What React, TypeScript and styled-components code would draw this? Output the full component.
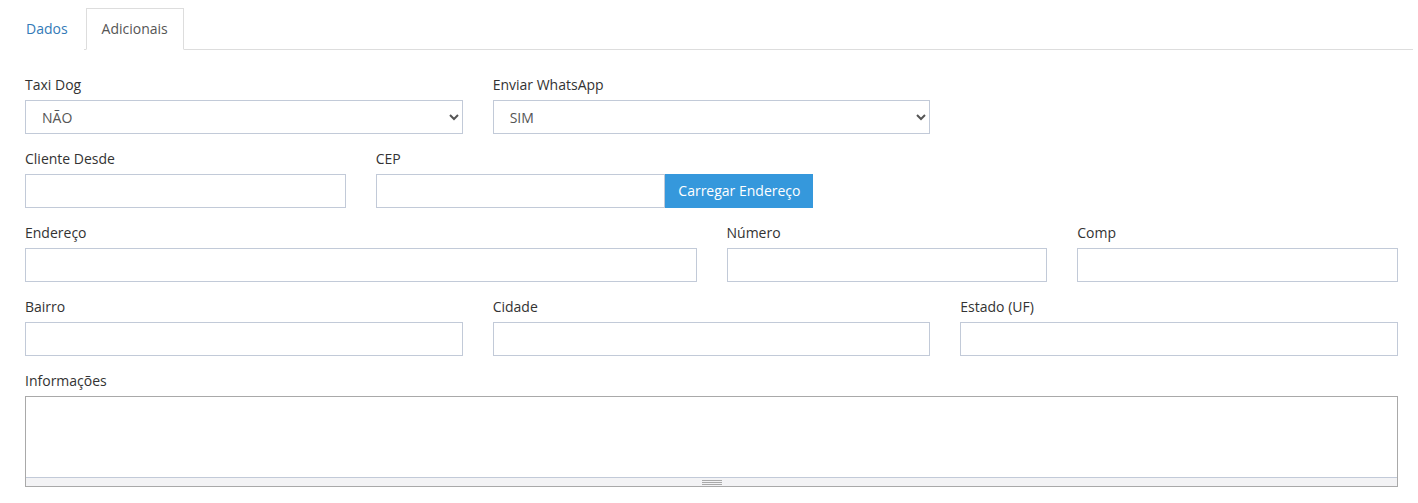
import React, { useState } from 'react';
import styled, { createGlobalStyle } from 'styled-components';

const GlobalStyle = createGlobalStyle`
  * { box-sizing: border-box; }
  body {
    margin: 0;
    background: #fff;
    font-family: "Open Sans", "Liberation Sans", sans-serif;
    font-size: 14px;
    line-height: 1.42857;
    color: #333;
  }
`;

const Page = styled.div`
  padding: 8px 5px 0 10px;
`;

const Tabs = styled.ul`
  display: flex;
  list-style: none;
  margin: 0;
  padding: 0;
  border-bottom: 1px solid #ddd;
`;

const Tab = styled.li<{ $active?: boolean }>`
  margin-right: 2px;
  margin-bottom: -1px;
  padding: 10px 15px;
  border: 1px solid ${p => (p.$active ? '#ddd' : 'transparent')};
  border-bottom-color: ${p => (p.$active ? '#fff' : 'transparent')};
  background: #fff;
  color: ${p => (p.$active ? '#555' : '#337ab7')};
  cursor: pointer;
  line-height: 20px;
`;

const Body = styled.div`
  padding: 25px 0 0;
`;

const Row = styled.div`
  display: flex;
  flex-wrap: wrap;
`;

const Group = styled.div<{ $span: number }>`
  width: ${p => (p.$span / 12) * 100}%;
  padding: 0 15px;
  margin-bottom: 15px;
`;

const Label = styled.label`
  display: block;
  margin-bottom: 5px;
  color: #333;
  line-height: 20px;
`;

const Input = styled.input`
  display: block;
  width: 100%;
  height: 34px;
  padding: 6px 12px;
  border: 1px solid #c2cad8;
  border-radius: 0;
  font: inherit;
  color: #555;
  background: #fff;
  outline: none;
`;

const Select = styled.select`
  display: block;
  width: 100%;
  height: 34px;
  padding: 6px 12px;
  border: 1px solid #c2cad8;
  border-radius: 0;
  font: inherit;
  color: #555;
  background: #fff;
  outline: none;
`;

const InputGroup = styled.div`
  display: flex;
  ${Input} { flex: 1; min-width: 0; }
`;

const Button = styled.button`
  flex: none;
  width: 148px;
  height: 34px;
  border: none;
  border-radius: 0;
  background: #3598dc;
  color: #fff;
  font: inherit;
  cursor: pointer;
`;

const Editor = styled.div`
  border: 1px solid #a9a9a9;
`;

const Area = styled.textarea`
  display: block;
  width: 100%;
  height: 80px;
  border: none;
  resize: none;
  outline: none;
  font: inherit;
`;

const StatusBar = styled.div`
  display: flex;
  justify-content: center;
  align-items: center;
  height: 9px;
  border-top: 1px solid #c2cad8;
  background: #f3f3f5;
  cursor: ns-resize;
`;

const Grip = styled.div`
  width: 20px;
  height: 5px;
  border-top: 1px solid #a9a9a9;
  border-bottom: 1px solid #a9a9a9;
  position: relative;
  &::after {
    content: '';
    position: absolute;
    left: 0;
    right: 0;
    top: 1px;
    border-top: 1px solid #a9a9a9;
  }
`;

export default function App() {
  const [tab, setTab] = useState('adicionais');
  return (
    <Page>
      <GlobalStyle />
      <Tabs>
        <Tab $active={tab === 'dados'} onClick={() => setTab('dados')}>Dados</Tab>
        <Tab $active={tab === 'adicionais'} onClick={() => setTab('adicionais')}>Adicionais</Tab>
      </Tabs>
      <Body>
        <Row>
          <Group $span={4}>
            <Label>Taxi Dog</Label>
            <Select defaultValue="nao">
              <option value="nao">NÃO</option>
              <option value="sim">SIM</option>
            </Select>
          </Group>
          <Group $span={4}>
            <Label>Enviar WhatsApp</Label>
            <Select defaultValue="sim">
              <option value="sim">SIM</option>
              <option value="nao">NÃO</option>
            </Select>
          </Group>
        </Row>
        <Row>
          <Group $span={3}>
            <Label>Cliente Desde</Label>
            <Input />
          </Group>
          <Group $span={4}>
            <Label>CEP</Label>
            <InputGroup>
              <Input />
              <Button>Carregar Endereço</Button>
            </InputGroup>
          </Group>
        </Row>
        <Row>
          <Group $span={6}>
            <Label>Endereço</Label>
            <Input />
          </Group>
          <Group $span={3}>
            <Label>Número</Label>
            <Input />
          </Group>
          <Group $span={3}>
            <Label>Comp</Label>
            <Input />
          </Group>
        </Row>
        <Row>
          <Group $span={4}>
            <Label>Bairro</Label>
            <Input />
          </Group>
          <Group $span={4}>
            <Label>Cidade</Label>
            <Input />
          </Group>
          <Group $span={4}>
            <Label>Estado (UF)</Label>
            <Input />
          </Group>
        </Row>
        <Row>
          <Group $span={12}>
            <Label>Informações</Label>
            <Editor>
              <Area />
              <StatusBar>
                <Grip />
              </StatusBar>
            </Editor>
          </Group>
        </Row>
      </Body>
    </Page>
  );
}
